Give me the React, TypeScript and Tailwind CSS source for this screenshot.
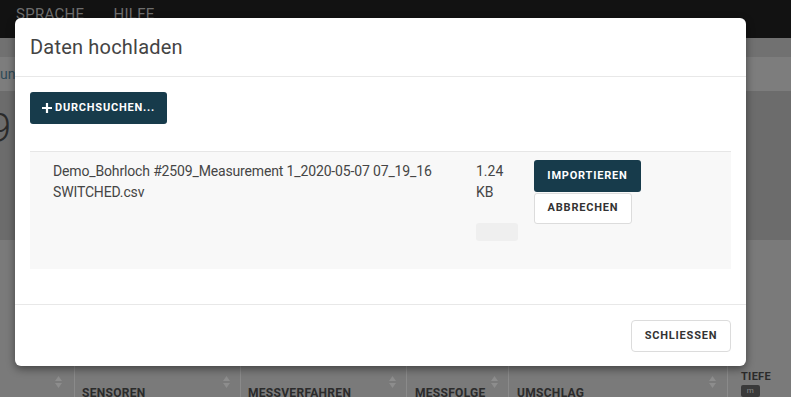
import React from "react";

const font = { fontFamily: "Roboto, 'Noto Sans', sans-serif" };

function SortArrows() {
  return (
    <div className="flex flex-col items-center gap-[2px] opacity-60">
      <svg width="7" height="5" viewBox="0 0 7 5"><path d="M3.5 0L7 5H0z" fill="#9a9a9a" /></svg>
      <svg width="7" height="5" viewBox="0 0 7 5"><path d="M0 0h7L3.5 5z" fill="#9a9a9a" /></svg>
    </div>
  );
}

export default function App() {
  return (
    <div className="relative w-[791px] h-[397px] overflow-hidden" style={font}>
      {/* background page (dimmed) */}
      <div className="flex flex-col h-full">
        <div className="h-[38px] bg-[#121212] flex items-start gap-[29px] pl-[16px] pt-[3px] text-[15px] text-[#6e6e6e] tracking-[0.3px]">
          <span>SPRACHE</span>
          <span>HILFE</span>
        </div>
        <div className="h-[19px] bg-[#717171]" />
        <div className="h-[34px] bg-[#7d7d7d] flex items-center text-[14px] text-[#2f4b58]">ung</div>
        <div className="h-[149px] bg-[#6c6c6c] pt-[18px] text-[40px] leading-none text-[#2a2a2a] font-light -ml-[11px]">9</div>
        <div className="flex-1 bg-[#7a7a7a] flex flex-col justify-end">
          <div className="h-[31px] flex text-[12px] font-bold text-[#2b2b2b] tracking-[0.3px]">
            <div className="w-[75px] border-r border-[#8a8a8a] flex justify-end pr-[12px] pt-[10px]"><SortArrows /></div>
            <div className="w-[166px] border-r border-[#8a8a8a] flex justify-between pl-[7px] pr-[10px] pt-[10px]"><span className="self-end leading-none mb-[-2px]">SENSOREN</span><SortArrows /></div>
            <div className="w-[166px] border-r border-[#8a8a8a] flex justify-between pl-[7px] pr-[10px] pt-[10px]"><span className="self-end leading-none mb-[-2px]">MESSVERFAHREN</span><SortArrows /></div>
            <div className="w-[102px] border-r border-[#8a8a8a] flex justify-between pl-[8px] pr-[10px] pt-[10px]"><span className="self-end leading-none mb-[-2px]">MESSFOLGE</span><SortArrows /></div>
            <div className="w-[219px] border-r border-[#8a8a8a] flex justify-between pl-[8px] pr-[11px] pt-[10px]"><span className="self-end leading-none mb-[-2px]">UMSCHLAG</span><SortArrows /></div>
            <div className="flex-1 pl-[13px] flex flex-col">
              <span className="leading-none text-[11px] mt-[5px]">TIEFE</span>
              <span className="mt-[3px] w-[19px] h-[12px] bg-[#3a3a3a] rounded-[2px] text-[8px] text-[#888] flex justify-center font-normal">m</span>
            </div>
          </div>
        </div>
      </div>

      {/* modal */}
      <div className="absolute left-[15px] top-[18px] w-[731px] h-[348px] bg-white rounded-[6px] shadow-[0_3px_8px_rgba(0,0,0,0.45)] flex flex-col">
        <div className="h-[59px] border-b border-[#e8e8e8] flex items-center px-[15px]">
          <h2 className="text-[20px] text-[#444] tracking-[0.2px]">Daten hochladen</h2>
        </div>
        <div className="flex-1 px-[15px] pt-[15px]">
          <button className="h-[32px] w-[137px] bg-[#173b4b] rounded-[3px] text-white text-[11px] font-bold tracking-[0.8px] flex items-center justify-center gap-[3px]">
            <svg width="10" height="10" viewBox="0 0 10 10"><path d="M5 0v10M0 5h10" stroke="white" strokeWidth="2.2" /></svg>
            DURCHSUCHEN...
          </button>
          <div className="mt-[27px] h-[118px] bg-[#f8f8f8] border-t border-[#e6e6e6] flex pl-[23px] pt-[8px] gap-[16px]">
            <div className="w-[407px] text-[14px] leading-[21px] text-[#454545] tracking-[-0.15px] pt-[1px]">
              Demo_Bohrloch #2509_Measurement 1_2020-05-07 07_19_16 SWITCHED.csv
            </div>
            <div className="w-[42px] flex flex-col text-[14px] leading-[21px] text-[#454545] pt-[1px]">
              <span>1.24</span>
              <span>KB</span>
              <div className="mt-[20px] h-[18px] w-[42px] bg-[#efefef] rounded-[3px]" />
            </div>
            <div className="flex flex-col items-start gap-[1px]">
              <button className="h-[32px] w-[107px] bg-[#173b4b] rounded-[3px] text-white text-[11px] font-bold tracking-[0.8px]">IMPORTIEREN</button>
              <button className="h-[31px] w-[98px] bg-white border border-[#dcdcdc] rounded-[3px] text-[#333] text-[11px] font-bold tracking-[0.8px]">ABBRECHEN</button>
            </div>
          </div>
        </div>
        <div className="h-[62px] border-t border-[#e8e8e8] flex justify-end items-start pt-[15px] px-[15px]">
          <button className="h-[32px] w-[100px] bg-white border border-[#dcdcdc] rounded-[4px] text-[#333] text-[11px] font-bold tracking-[0.8px]">SCHLIESSEN</button>
        </div>
      </div>
    </div>
  );
}
